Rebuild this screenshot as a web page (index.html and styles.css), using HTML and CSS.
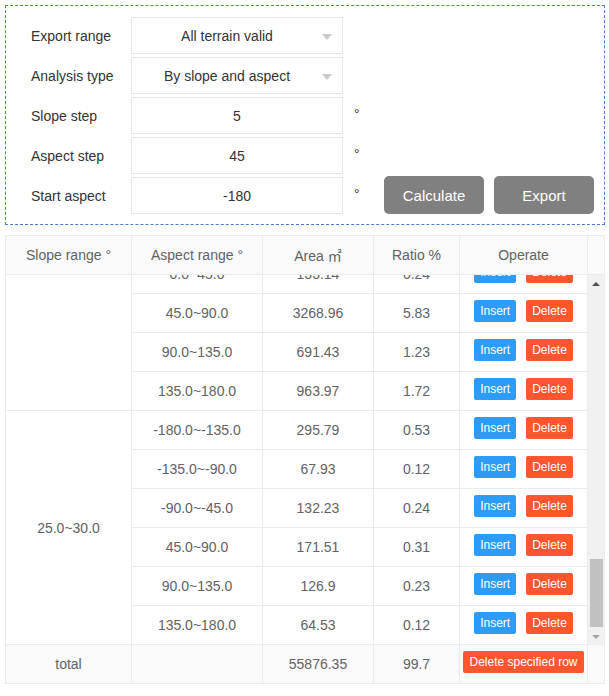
FILE: index.html
```html
<!DOCTYPE html>
<html lang="en">
<head>
<meta charset="UTF-8">
<meta name="viewport" content="width=device-width, initial-scale=1.0">
<title>Slope and aspect statistics</title>
<link rel="stylesheet" href="styles.css">
</head>
<body>
<div class="page">
  <div class="params">
    <div class="fields">
      <div class="field">
        <span class="label">Export range</span>
        <div class="input select">All terrain valid<span class="arrow"></span></div>
      </div>
      <div class="field">
        <span class="label">Analysis type</span>
        <div class="input select">By slope and aspect<span class="arrow"></span></div>
      </div>
      <div class="field">
        <span class="label">Slope step</span>
        <div class="input">5</div>
        <span class="unit">°</span>
      </div>
      <div class="field">
        <span class="label">Aspect step</span>
        <div class="input">45</div>
        <span class="unit">°</span>
      </div>
      <div class="field">
        <span class="label">Start aspect</span>
        <div class="input">-180</div>
        <span class="unit">°</span>
      </div>
    </div>
    <div class="actions">
      <button class="btn-gray">Calculate</button>
      <button class="btn-gray">Export</button>
    </div>
  </div>

  <div class="stat-table">
    <table class="grid head">
      <colgroup>
        <col class="c1"><col class="c2"><col class="c3"><col class="c4"><col class="c5"><col class="cg">
      </colgroup>
      <tr>
        <th>Slope range °</th>
        <th>Aspect range °</th>
        <th>Area ㎡</th>
        <th>Ratio %</th>
        <th>Operate</th>
        <th class="gutter"></th>
      </tr>
    </table>

    <div class="body-wrap">
      <div class="body-scroll" id="body-scroll">
        <table class="grid">
          <colgroup>
            <col class="c1"><col class="c2"><col class="c3"><col class="c4"><col class="c5">
          </colgroup>
          <tbody id="rows"></tbody>
        </table>
      </div>
      <div class="scrollbar">
        <div class="sb-btn"><span class="sb-up"></span></div>
        <div class="sb-track"><div class="sb-thumb"></div></div>
        <div class="sb-btn"><span class="sb-down"></span></div>
      </div>
    </div>

    <table class="grid foot">
      <colgroup>
        <col class="c1"><col class="c2"><col class="c3"><col class="c4"><col class="c5"><col class="cg">
      </colgroup>
      <tr>
        <td>total</td>
        <td></td>
        <td>55876.35</td>
        <td>99.7</td>
        <td class="ops"><button class="btn btn-delete">Delete specified row</button></td>
        <td class="gutter"></td>
      </tr>
    </table>
  </div>
</div>

<script>
const groups = [
  { slope: '0.0~5.0', rows: [
    ['-180.0~-135.0', '1523.41', '2.73'], ['-135.0~-90.0', '1187.62', '2.13'],
    ['-90.0~-45.0', '1342.08', '2.40'], ['-45.0~0.0', '1609.77', '2.88'],
    ['0.0~45.0', '1455.30', '2.60'], ['45.0~90.0', '1298.45', '2.32'],
    ['90.0~135.0', '1410.66', '2.52'], ['135.0~180.0', '1376.19', '2.46'] ] },
  { slope: '5.0~10.0', rows: [
    ['-180.0~-135.0', '2214.37', '3.96'], ['-135.0~-90.0', '1987.25', '3.56'],
    ['-90.0~-45.0', '2103.84', '3.77'], ['-45.0~0.0', '2356.12', '4.22'],
    ['0.0~45.0', '2278.49', '4.08'], ['45.0~90.0', '2049.73', '3.67'],
    ['90.0~135.0', '1934.58', '3.46'], ['135.0~180.0', '2167.90', '3.88'] ] },
  { slope: '10.0~15.0', rows: [
    ['-180.0~-135.0', '1465.28', '2.62'], ['-135.0~-90.0', '1302.17', '2.33'],
    ['-90.0~-45.0', '1188.94', '2.13'], ['-45.0~0.0', '1521.36', '2.72'],
    ['0.0~45.0', '1399.05', '2.50'], ['45.0~90.0', '1276.43', '2.28'],
    ['90.0~135.0', '1154.81', '2.07'], ['135.0~180.0', '1338.62', '2.40'] ] },
  { slope: '15.0~20.0', rows: [
    ['-180.0~-135.0', '812.56', '1.45'], ['-135.0~-90.0', '743.19', '1.33'],
    ['-90.0~-45.0', '698.42', '1.25'], ['-45.0~0.0', '865.03', '1.55'],
    ['0.0~45.0', '790.77', '1.42'], ['45.0~90.0', '721.38', '1.29'],
    ['90.0~135.0', '654.90', '1.17'], ['135.0~180.0', '703.25', '1.26'] ] },
  { slope: '20.0~25.0', rows: [
    ['-180.0~-135.0', '402.61', '0.72'], ['-135.0~-90.0', '356.84', '0.64'],
    ['-90.0~-45.0', '318.27', '0.57'], ['-45.0~0.0', '289.45', '0.52'],
    ['0.0~45.0', '133.14', '0.24'], ['45.0~90.0', '3268.96', '5.83'],
    ['90.0~135.0', '691.43', '1.23'], ['135.0~180.0', '963.97', '1.72'] ] },
  { slope: '25.0~30.0', rows: [
    ['-180.0~-135.0', '295.79', '0.53'], ['-135.0~-90.0', '67.93', '0.12'],
    ['-90.0~-45.0', '132.23', '0.24'], ['45.0~90.0', '171.51', '0.31'],
    ['90.0~135.0', '126.9', '0.23'], ['135.0~180.0', '64.53', '0.12'] ] }
];

// 表の行を作る
function renderRows() {
  const tbody = document.getElementById('rows');
  let html = '';
  groups.forEach(function(group) {
    group.rows.forEach(function(row, i) {
      html += '<tr>';
      if (i === 0) {
        html += `<td rowspan="${group.rows.length}">${group.slope}</td>`;
      }
      html += `<td>${row[0]}</td><td>${row[1]}</td><td>${row[2]}</td>`;
      html += '<td class="ops"><button class="btn btn-insert">Insert</button><button class="btn btn-delete">Delete</button></td>';
      html += '</tr>';
    });
  });
  tbody.innerHTML = html;
}

renderRows();
const scroller = document.getElementById('body-scroll');
scroller.scrollTop = scroller.scrollHeight;
</script>
</body>
</html>
```

FILE: styles.css
```css
body {
  margin: 0;
  font-family: "Liberation Sans", Arial, "Noto Sans CJK SC", sans-serif;
  font-size: 14px;
  color: #333;
  background: #fff;
}
.page {
  width: 600px;
  margin: 5px 0 0 5px;
}

/* 入力エリア */
.params {
  display: flex;
  border: 1px dashed #4a7bd4;
  padding: 11px 10px 10px 25px;
}
.fields {
  display: flex;
  flex-direction: column;
  gap: 3px;
}
.field {
  display: flex;
  align-items: center;
  height: 37px;
}
.label {
  width: 100px;
}
.input {
  position: relative;
  box-sizing: border-box;
  width: 212px;
  height: 37px;
  line-height: 37px;
  border: 1px solid #e6e6e6;
  text-align: center;
}
.select {
  padding-right: 20px;
}
.arrow {
  position: absolute;
  right: 10px;
  top: 16px;
  border-left: 5px solid transparent;
  border-right: 5px solid transparent;
  border-top: 6px solid #cbcbcb;
}
.unit {
  margin-left: 11px;
  margin-bottom: 4px;
  font-size: 14px;
}
.actions {
  display: flex;
  gap: 10px;
  align-self: flex-end;
  margin-left: auto;
}
.btn-gray {
  width: 100px;
  height: 38px;
  border: none;
  border-radius: 5px;
  background: #808080;
  color: #fff;
  font-family: inherit;
  font-size: 15px;
}

/* 表 */
.stat-table {
  margin-top: 10px;
  border-top: 1px solid #ebebeb;
  border-left: 1px solid #ebebeb;
  border-right: 1px solid #ebebeb;
}
.grid {
  width: 100%;
  table-layout: fixed;
  border-collapse: separate;
  border-spacing: 0;
  color: #606266;
}
.c1 { width: 126px; }
.c2 { width: 131px; }
.c3 { width: 111px; }
.c4 { width: 86px; }
.c5 { width: 128px; }
.cg { width: 16px; }
.grid th,
.grid td {
  box-sizing: border-box;
  height: 39px;
  padding: 0;
  border-right: 1px solid #ebebeb;
  border-bottom: 1px solid #ebebeb;
  text-align: center;
  font-weight: normal;
}
.grid .ops {
  padding-bottom: 4px;
}
.grid .gutter {
  border-right: none;
}
.head th {
  background: #fafafa;
}
.foot td {
  background: #fafafa;
}
.body-wrap {
  display: flex;
  height: 370px;
}
.body-scroll {
  width: 582px;
  overflow: hidden;
}
.scrollbar {
  display: flex;
  flex-direction: column;
  width: 16px;
  background: #f1f1f1;
}
.sb-btn {
  display: flex;
  align-items: center;
  justify-content: center;
  height: 17px;
}
.sb-up {
  border-left: 4px solid transparent;
  border-right: 4px solid transparent;
  border-bottom: 4px solid #505050;
}
.sb-down {
  border-left: 4px solid transparent;
  border-right: 4px solid transparent;
  border-top: 4px solid #a3a3a3;
}
.sb-track {
  flex: 1;
  display: flex;
  flex-direction: column;
  justify-content: flex-end;
  padding: 0 1px 1px 2px;
}
.sb-thumb {
  height: 68px;
  background: #c1c1c1;
}

/* 操作ボタン */
.btn {
  height: 22px;
  padding: 0 6px;
  border: none;
  border-radius: 2px;
  color: #fff;
  font-family: inherit;
  font-size: 12px;
  vertical-align: middle;
}
.btn-insert {
  background: #2d9cf8;
  margin-right: 10px;
}
.btn-delete {
  background: #ff5630;
}
```
